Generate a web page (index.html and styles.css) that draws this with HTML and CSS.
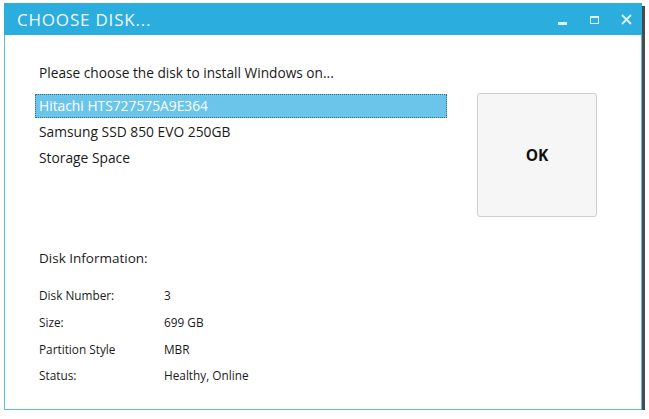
FILE: index.html
```html
<!DOCTYPE html>
<html lang="en">
<head>
    <meta charset="UTF-8">
    <title>Choose Disk</title>
    <link rel="stylesheet" href="styles.css">
</head>
<body>
    <div class="window">
        <header class="titlebar">
            <span class="title">CHOOSE DISK...</span>
            <div class="controls">
                <span class="ctl ctl-min"></span>
                <span class="ctl ctl-max"></span>
                <span class="ctl ctl-close">
                    <svg width="11" height="11" viewBox="0 0 11 11"><path d="M1 1L10 10M10 1L1 10" stroke="#dff3fb" stroke-width="1.8"/></svg>
                </span>
            </div>
        </header>

        <div class="content">
            <p class="prompt">Please choose the disk to install Windows on...</p>

            <div class="picker">
                <ul class="disk-list">
                    <li class="selected">Hitachi HTS727575A9E364</li>
                    <li>Samsung SSD 850 EVO 250GB</li>
                    <li>Storage Space</li>
                </ul>
                <button class="ok">OK</button>
            </div>

            <h3 class="info-title">Disk Information:</h3>
            <table class="info">
                <tr><td>Disk Number:</td><td>3</td></tr>
                <tr><td>Size:</td><td>699 GB</td></tr>
                <tr><td>Partition Style</td><td>MBR</td></tr>
                <tr><td>Status:</td><td>Healthy, Online</td></tr>
            </table>
        </div>
    </div>
</body>
</html>
```

FILE: styles.css
```css
/* General Styles */
body {
    margin: 0;
    padding: 3px 0 0 4px;
    background: #ffffff;
    font-family: "Open Sans", "Noto Sans", sans-serif;
    color: #1a1a1a;
}
.window {
    width: 636px;
    height: 406px;
    border: 1px solid #5bbde3;
    border-top: none;
    background: #ffffff;
    box-shadow: 3px 3px 0 #4a4a4a;
    display: flex;
    flex-direction: column;
}
.titlebar {
    height: 32px;
    background-color: #2badde;
    display: flex;
    align-items: center;
    justify-content: space-between;
    padding: 0 0 0 13px;
    margin: 0 -1px;
}
.title {
    color: #eef9fd;
    font-size: 17px;
    letter-spacing: 0.8px;
}
.controls {
    display: flex;
    align-items: center;
    height: 100%;
}
.ctl {
    width: 32px;
    height: 100%;
    display: flex;
    align-items: center;
    justify-content: center;
}
.ctl-min::before {
    content: "";
    width: 9px;
    height: 3px;
    margin-top: 9px;
    background: #dff3fb;
}
.ctl-max::before {
    content: "";
    width: 7px;
    height: 5px;
    margin-top: 1px;
    border: 1px solid #dff3fb;
    border-top-width: 2px;
}
.content {
    padding: 28px 0 0 34px;
}
.prompt {
    margin: 0 0 12px 0;
    font-size: 13.7px;
}
.picker {
    display: flex;
    align-items: flex-start;
    margin-left: -4px;
}
.disk-list {
    list-style: none;
    margin: 0;
    padding: 0;
    width: 412px;
    font-size: 13.8px;
}
.disk-list li {
    height: 26px;
    line-height: 23px;
    padding-left: 4px;
    box-sizing: border-box;
}
.disk-list li.selected {
    background: #6bc4e9;
    border: 1px dotted #2f6f8a;
    height: 24px;
    margin-bottom: 2px;
    line-height: 22px;
    padding-left: 3px;
    color: #ffffff;
}
.ok {
    margin-left: 30px;
    margin-top: -1px;
    width: 120px;
    height: 124px;
    background: #f6f6f6;
    border: 1px solid #cfcfcf;
    border-radius: 3px;
    font-family: "Open Sans", sans-serif;
    font-weight: bold;
    font-size: 15.5px;
    color: #111;
}
.info-title {
    margin: 32px 0 15px 0;
    font-size: 13.5px;
    font-weight: normal;
}
.info {
    border-collapse: collapse;
    font-size: 11.8px;
}
.info td {
    padding: 0;
    height: 26.7px;
}
.info td:first-child {
    width: 125px;
}
```
